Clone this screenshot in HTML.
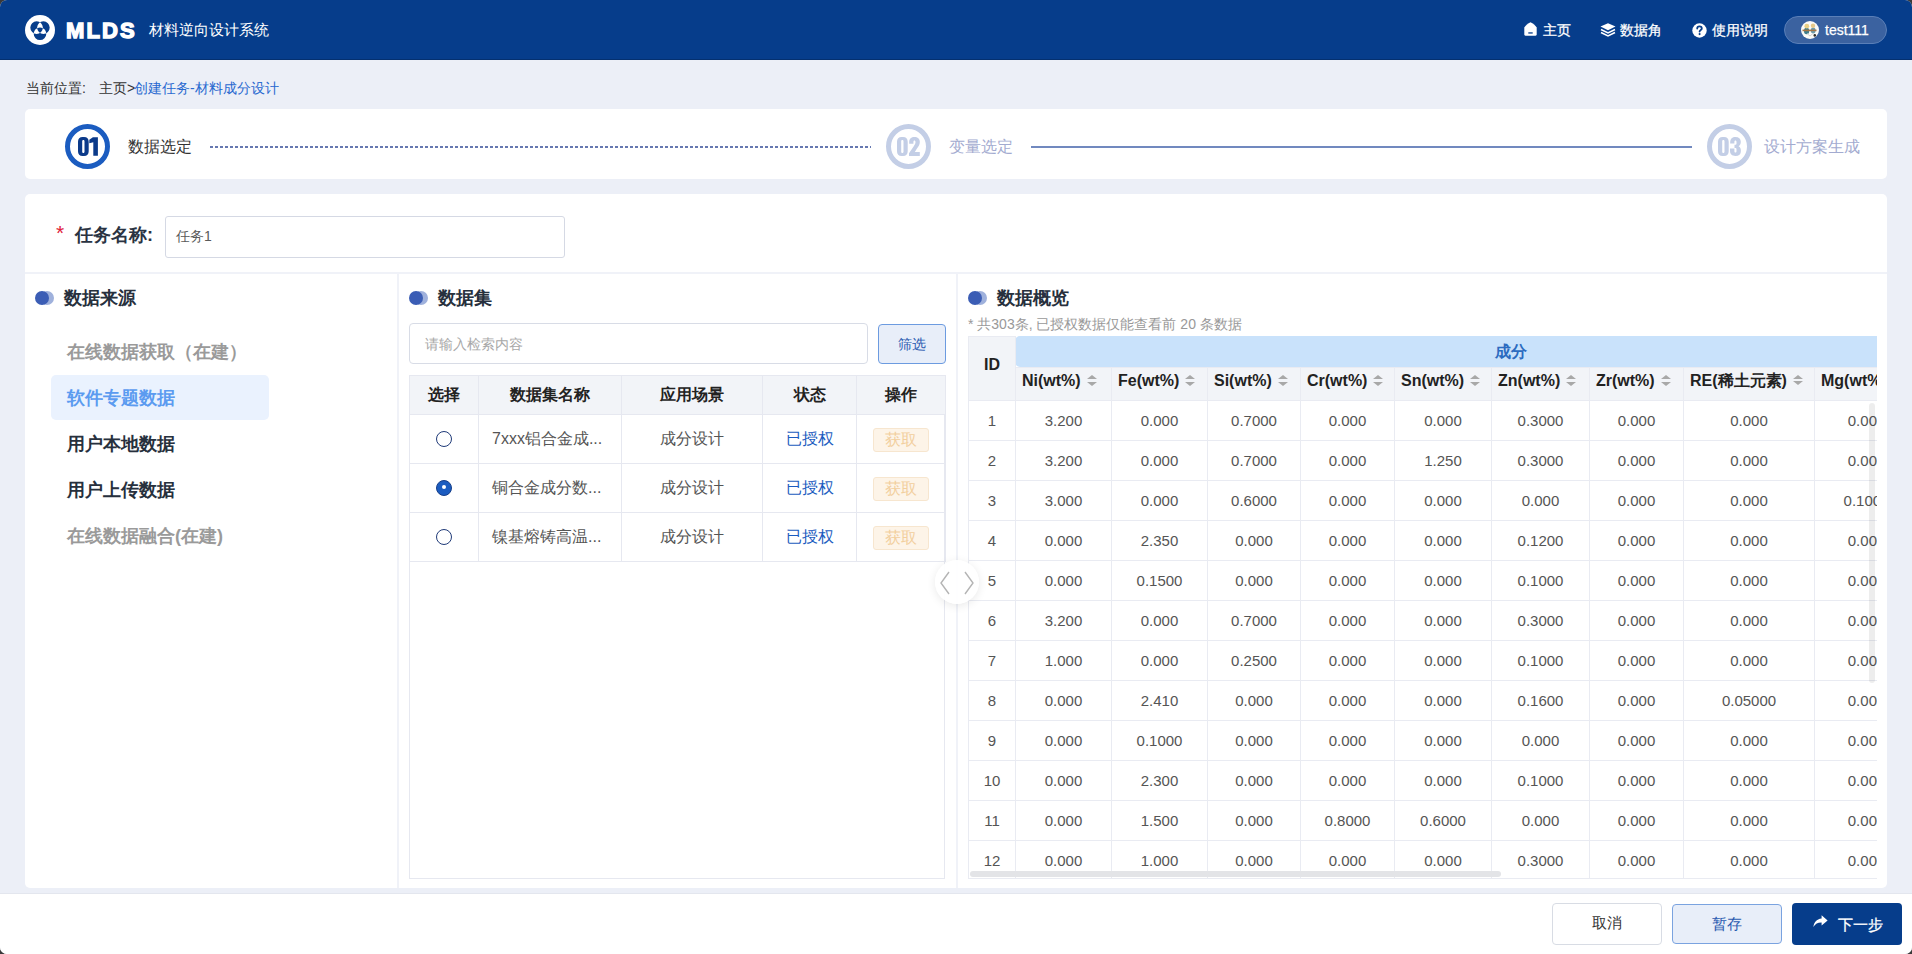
<!DOCTYPE html>
<html><head><meta charset="utf-8"><title>MLDS</title>
<style>
*{box-sizing:border-box;margin:0;padding:0}
html,body{width:1912px;height:954px;overflow:hidden;background:#3a3a3a}
body{font-family:"Liberation Sans",sans-serif;position:relative}
#app{position:absolute;left:0;top:0;width:1912px;height:954px;background:#eceff7;border-radius:7px;overflow:hidden}
.abs{position:absolute}
.hdr{left:0;top:0;width:1912px;height:60px;background:#063d8b;border-bottom:1px solid #04306f}
.nav{top:0;height:60px;line-height:60px;color:#fff;font-size:14px;white-space:nowrap;-webkit-text-stroke:0.25px #fff}
.pill{left:1784px;top:16px;width:103px;height:28px;border-radius:14px;background:#3b62a0;border:1px solid #5a7fb8}
.card{background:#fff;border-radius:5px}
.step-c{width:45px;height:45px;border-radius:50%;border:5px solid #1b5cc0}
.step-n{position:absolute;left:0;top:0;width:35px;line-height:35px;font-family:"Liberation Sans Narrow","Liberation Sans",sans-serif;font-weight:bold;font-size:24px;color:#0b3684;letter-spacing:-1px}
.step-t{font-size:16px;line-height:20px;top:137px}
.sect-dot{width:19px;height:14px}
.sect-dot:before{content:"";position:absolute;left:5px;top:0;width:14px;height:14px;border-radius:50%;background:#9fb1dc}
.sect-dot:after{content:"";position:absolute;left:0;top:0;width:14px;height:14px;border-radius:50%;background:#3b5db5}
.sect-t{font-size:18px;font-weight:bold;color:#27303d;line-height:24px}
.src{left:67px;font-size:18px;font-weight:bold;line-height:24px;color:#27303d;white-space:nowrap}
.src.dis{color:#9a9a9a}
table{border-collapse:collapse;table-layout:fixed}
.ds td,.ds th{border:1px solid #e6e8f0;text-align:center;font-size:16px;white-space:nowrap;overflow:hidden}
.ds th{background:#f2f4f8;color:#222;font-weight:bold;height:39px}
.ds td{height:49px;color:#555}
.radio{display:inline-block;width:16px;height:16px;border-radius:50%;border:1.3px solid #1f3a78;vertical-align:middle;position:relative;top:-1px}
.radio.on{background:#1b5cc0;border-color:#173f8a}
.radio.on:after{content:"";position:absolute;left:4.7px;top:4.7px;width:4px;height:4px;border-radius:50%;background:#fff}
.get{display:inline-block;width:56px;height:24px;line-height:22px;border:1px solid #f7e6cf;background:#fdf4e8;color:#f2cf9e;border-radius:3px;font-size:16px;vertical-align:middle;position:relative;top:1px}
.ov td,.ov th{border:1px solid #e9ebf2;font-size:15px;white-space:nowrap;overflow:hidden}
.ov td{height:40px;text-align:center;color:#555}
.ov th{background:#f2f4f8;color:#222;font-weight:bold;text-align:left;padding-left:6px;font-size:16px;padding-bottom:6px}
.sort{display:inline-block;width:10px;height:11px;position:relative;margin-left:6px;vertical-align:0px}
.sort:before{content:"";position:absolute;left:0;top:0;border-left:5px solid transparent;border-right:5px solid transparent;border-bottom:4.5px solid #a8a8a8}
.sort:after{content:"";position:absolute;left:0;top:6.5px;border-left:5px solid transparent;border-right:5px solid transparent;border-top:4.5px solid #a8a8a8}
.btn{height:41px;border-radius:4px;text-align:center;line-height:39px;font-size:14.5px}
</style></head>
<body>
<div id="app">
  <!-- header -->
  <div class="abs hdr"></div>
  <svg class="abs" style="left:25px;top:15px" width="30" height="30" viewBox="0 0 30 30">
    <circle cx="15" cy="15" r="15" fill="#fff"/>
    <path fill="#063d8b" fill-rule="evenodd" d="M5.3 12.6a6.3 6.3 0 1 0 12.6 0a6.3 6.3 0 1 0 -12.6 0Z M12.1 12.6a6.3 6.3 0 1 0 12.6 0a6.3 6.3 0 1 0 -12.6 0Z M8.7 18.7a6.3 6.3 0 1 0 12.6 0a6.3 6.3 0 1 0 -12.6 0Z"/>
  </svg>
  <div class="abs" style="left:66px;top:18px;font-size:22px;line-height:26px;font-weight:bold;color:#fff;letter-spacing:2.1px;-webkit-text-stroke:1.4px #fff">MLDS</div>
  <div class="abs" style="left:149px;top:20px;font-size:15px;line-height:20px;color:#fff">材料逆向设计系统</div>

  <svg class="abs" style="left:1524px;top:22px" width="13" height="14" viewBox="0 0 13 14"><path fill="#fff" d="M6.5 0.3C4 1.6 1.6 3.3 0.3 5.6V12.6C0.3 13.2 0.8 13.7 1.4 13.7H11.6C12.2 13.7 12.7 13.2 12.7 12.6V5.6C11.4 3.3 9 1.6 6.5 0.3Z"/><rect x="4.3" y="10.3" width="4.4" height="1.3" fill="#063d8b"/></svg>
  <div class="abs nav" style="left:1543px;font-weight:500">主页</div>
  <svg class="abs" style="left:1600px;top:23px" width="16" height="14" viewBox="0 0 16 14"><path fill="#fff" d="M8 0.2L15.5 3.6L8 7.2L0.5 3.6Z"/><path fill="none" stroke="#fff" stroke-width="1.7" d="M1 6.6L8 9.9L15 6.6M1 9.6L8 12.9L15 9.6"/></svg>
  <div class="abs nav" style="left:1620px;font-weight:500">数据角</div>
  <svg class="abs" style="left:1692px;top:23px" width="15" height="15" viewBox="0 0 15 15"><circle cx="7.5" cy="7.5" r="7.2" fill="#fff"/><path fill="none" stroke="#063d8b" stroke-width="1.8" stroke-linecap="round" d="M5.2 5.6C5.2 4.2 6.2 3.4 7.5 3.4C8.8 3.4 9.8 4.2 9.8 5.4C9.8 6.9 7.6 7 7.6 8.6"/><circle cx="7.6" cy="11.1" r="1.05" fill="#063d8b"/></svg>
  <div class="abs nav" style="left:1712px;font-weight:500">使用说明</div>
  <div class="abs pill"></div>
  <svg class="abs" style="left:1801px;top:21px" width="18" height="18" viewBox="0 0 18 18"><defs><clipPath id="av"><circle cx="9" cy="9" r="9"/></clipPath></defs><g clip-path="url(#av)"><rect width="18" height="18" fill="#fbfaf7"/><ellipse cx="5.6" cy="10" rx="2.6" ry="3.2" fill="#3f7d8c"/><ellipse cx="12.2" cy="9.6" rx="2.4" ry="3" fill="#6d9cad"/><circle cx="5.8" cy="5.2" r="2.4" fill="#e9cf86"/><circle cx="12" cy="4.8" r="2.2" fill="#e7c98a"/><rect x="1.5" y="8.6" width="14" height="1.6" fill="#a57444"/><path d="M6 12.5L9 15L12 12.5" stroke="#cfcfcf" stroke-width="1" fill="none"/><circle cx="13.8" cy="14.4" r="1.3" fill="#2a2a2a"/></g></svg>
  <div class="abs nav" style="left:1825px;font-size:14px">test111</div>

  <!-- breadcrumb -->
  <div class="abs" style="left:26px;top:79px;font-size:14px;line-height:18px;color:#333;white-space:nowrap">当前位置</div><div class="abs" style="left:82px;top:79px;font-size:14px;line-height:18px;color:#333">:</div><div class="abs" style="left:99px;top:79px;font-size:14px;line-height:18px;color:#333;white-space:nowrap">主页&gt;</div><div class="abs" style="left:134px;top:79px;font-size:14px;line-height:18px;color:#2a6ad0;white-space:nowrap">创建任务-材料成分设计</div>

  <!-- stepper -->
  <div class="abs card" style="left:25px;top:109px;width:1862px;height:70px"></div>
  <div class="abs step-c" style="left:65px;top:124px"></div>
  <svg class="abs" style="left:77.7px;top:137.2px" width="23" height="19" viewBox="0 0 23 19" fill="#0b3a8a"><path d="M4.6 0C1.6 0 0 1.8 0 4.8V14.2C0 17.2 1.6 19 4.6 19H6.1C9.1 19 10.7 17.2 10.7 14.2V4.8C10.7 1.8 9.1 0 6.1 0ZM5.35 3C5.9 3 6.5 3.3 6.5 4.2V14.8C6.5 15.7 5.9 16 5.35 16C4.8 16 4.2 15.7 4.2 14.8V4.2C4.2 3.3 4.8 3 5.35 3Z"/><path transform="translate(11.3 0)" d="M0 2.8L3.6 0.2H8.6V18.7H4V5.2L0 6.2Z"/></svg>
  <div class="abs step-t" style="left:128px;color:#333">数据选定</div>
  <div class="abs" style="left:210px;top:146px;width:661px;height:2px;background:repeating-linear-gradient(90deg,#6678b0 0,#6678b0 3px,transparent 3px,transparent 5px)"></div>
  <div class="abs step-c" style="left:886px;top:124px;border-color:#c3cee6"></div>
  <svg class="abs" style="left:897px;top:137px" width="23" height="19" viewBox="0 0 23 19" fill="#c3cee6"><path d="M4.6 0C1.6 0 0 1.8 0 4.8V14.2C0 17.2 1.6 19 4.6 19H6.1C9.1 19 10.7 17.2 10.7 14.2V4.8C10.7 1.8 9.1 0 6.1 0ZM5.35 3C5.9 3 6.5 3.3 6.5 4.2V14.8C6.5 15.7 5.9 16 5.35 16C4.8 16 4.2 15.7 4.2 14.8V4.2C4.2 3.3 4.8 3 5.35 3Z"/><path transform="translate(12 0)" d="M0.2 6.8V5C0.2 1.6 2.3 0 5.4 0C8.7 0 10.8 1.8 10.8 5C10.8 7.6 9.6 9.2 7.8 11.8L5.8 14.9H10.8V19H0V16.3L4.6 9.6C6 7.5 6.5 6.5 6.5 5.1C6.5 4 6 3.5 5.4 3.5C4.8 3.5 4.4 4 4.4 5.1V6.8Z"/></svg>
  <div class="abs step-t" style="left:949px;color:#a3abd0">变量选定</div>
  <div class="abs" style="left:1031px;top:146px;width:661px;height:2px;background:#7189bf"></div>
  <div class="abs step-c" style="left:1707px;top:124px;border-color:#c3cee6"></div>
  <svg class="abs" style="left:1718px;top:137px" width="23" height="19" viewBox="0 0 23 19" fill="#c3cee6"><path d="M4.6 0C1.6 0 0 1.8 0 4.8V14.2C0 17.2 1.6 19 4.6 19H6.1C9.1 19 10.7 17.2 10.7 14.2V4.8C10.7 1.8 9.1 0 6.1 0ZM5.35 3C5.9 3 6.5 3.3 6.5 4.2V14.8C6.5 15.7 5.9 16 5.35 16C4.8 16 4.2 15.7 4.2 14.8V4.2C4.2 3.3 4.8 3 5.35 3Z"/><path transform="translate(12 0)" d="M0.2 5.8C0.2 1.6 2.4 0 5.4 0C8.8 0 10.8 1.7 10.8 4.8C10.8 7 10 8.5 8.6 9.3C10.2 10 10.9 11.6 10.9 14C10.9 17.4 9 19 5.4 19C1.9 19 0 17.3 0 13.6V11.6H4.4V14.1C4.4 15.1 4.8 15.6 5.4 15.6C6.1 15.6 6.5 15.1 6.5 14.1V12.2C6.5 11.2 6.1 10.9 5.2 10.9H4.5V7.8H5.2C6.1 7.8 6.5 7.5 6.5 6.5V5C6.5 4 6.1 3.5 5.4 3.5C4.8 3.5 4.4 4 4.4 5V6.6H0.2Z"/></svg>
  <div class="abs step-t" style="left:1764px;color:#a3abd0">设计方案生成</div>

  <!-- main card -->
  <div class="abs card" style="left:25px;top:194px;width:1862px;height:694px"></div>
  <div class="abs" style="left:56px;top:223px;font-size:21px;line-height:20px;color:#e0203a">*</div>
  <div class="abs" style="left:75px;top:223px;font-size:18px;line-height:24px;font-weight:bold;color:#2a3342">任务名称:</div>
  <div class="abs" style="left:165px;top:216px;width:400px;height:42px;border:1px solid #d5d9e4;border-radius:3px;background:#fff"></div>
  <div class="abs" style="left:176px;top:227px;font-size:14px;line-height:18px;color:#5a5a5a">任务1</div>

  <div class="abs" style="left:25px;top:272px;width:1862px;height:2px;background:#f0f2f8"></div>
  <div class="abs" style="left:397px;top:274px;width:2px;height:614px;background:#f0f2f8"></div>
  <div class="abs" style="left:956px;top:274px;width:2px;height:614px;background:#f0f2f8"></div>

  <!-- left: data sources -->
  <div class="abs sect-dot" style="left:35px;top:291px"></div>
  <div class="abs sect-t" style="left:64px;top:286px">数据来源</div>
  <div class="abs src dis" style="top:340px">在线数据获取（在建）</div>
  <div class="abs" style="left:51px;top:375px;width:218px;height:45px;border-radius:5px;background:#eaf2fe"></div>
  <div class="abs src" style="top:386px;color:#5b9bf0">软件专题数据</div>
  <div class="abs src" style="top:432px">用户本地数据</div>
  <div class="abs src" style="top:478px">用户上传数据</div>
  <div class="abs src dis" style="top:524px">在线数据融合(在建)</div>

  <!-- middle: datasets -->
  <div class="abs sect-dot" style="left:409px;top:291px"></div>
  <div class="abs sect-t" style="left:438px;top:286px">数据集</div>
  <div class="abs" style="left:409px;top:323px;width:459px;height:41px;border:1px solid #d8dce6;border-radius:4px"></div>
  <div class="abs" style="left:425px;top:335px;font-size:14px;line-height:18px;color:#a8a8a8">请输入检索内容</div>
  <div class="abs btn" style="left:878px;top:324px;width:68px;height:40px;line-height:38px;border:1px solid #6c9be0;background:#e8eef9;color:#2a5ab0;font-size:14px">筛选</div>
  <div class="abs" style="left:409px;top:376px;width:536px;height:503px;border:1px solid #e6e8f0;border-top:none"></div>
  <table class="abs ds" style="left:409px;top:375px;width:536px">
    <colgroup><col style="width:69px"><col style="width:143px"><col style="width:141px"><col style="width:94px"><col style="width:89px"></colgroup>
    <tr><th>选择</th><th>数据集名称</th><th>应用场景</th><th>状态</th><th>操作</th></tr>
    <tr><td><span class="radio"></span></td><td style="text-align:left;padding-left:13px">7xxx铝合金成...</td><td>成分设计</td><td style="color:#1b5cc0">已授权</td><td><span class="get">获取</span></td></tr>
    <tr><td><span class="radio on"></span></td><td style="text-align:left;padding-left:13px">铜合金成分数...</td><td>成分设计</td><td style="color:#1b5cc0">已授权</td><td><span class="get">获取</span></td></tr>
    <tr><td><span class="radio"></span></td><td style="text-align:left;padding-left:13px">镍基熔铸高温...</td><td>成分设计</td><td style="color:#1b5cc0">已授权</td><td><span class="get">获取</span></td></tr>
  </table>

  <!-- right: overview -->
  <div class="abs sect-dot" style="left:968px;top:291px"></div>
  <div class="abs sect-t" style="left:997px;top:286px">数据概览</div>
  <div class="abs" style="left:968px;top:315px;font-size:14px;line-height:18px;color:#999;white-space:nowrap">* 共303条, 已授权数据仅能查看前 20 条数据</div>
  <div class="abs" style="left:968px;top:336px;width:909px;height:542px;overflow:hidden" id="ovwrap">
  <div class="abs" style="left:47px;top:0;width:862px;height:31px;background:#c9e2fb;border-radius:5px 0 0 5px"></div>
  <table class="ov" style="width:950px;position:relative">
    <colgroup><col style="width:47px"><col style="width:96px"><col style="width:96px"><col style="width:93px"><col style="width:94px"><col style="width:97px"><col style="width:98px"><col style="width:94px"><col style="width:131px"><col style="width:104px"></colgroup>
    <tr><th rowspan="2" style="text-align:center;padding:0 0 8px 0;height:64px">ID</th><th colspan="9" style="background:transparent;color:#2c6bc0;text-align:left;padding-left:479px;padding-bottom:0;height:31px;border-top-color:transparent;border-right-color:transparent">成分</th></tr>
    <tr><th style="height:33px">Ni(wt%)<i class="sort"></i></th><th>Fe(wt%)<i class="sort"></i></th><th>Si(wt%)<i class="sort"></i></th><th>Cr(wt%)<i class="sort"></i></th><th>Sn(wt%)<i class="sort"></i></th><th>Zn(wt%)<i class="sort"></i></th><th>Zr(wt%)<i class="sort"></i></th><th>RE(稀土元素)<i class="sort"></i></th><th>Mg(wt%)<i class="sort"></i></th></tr>
    <tr><td>1</td><td>3.200</td><td>0.000</td><td>0.7000</td><td>0.000</td><td>0.000</td><td>0.3000</td><td>0.000</td><td>0.000</td><td>0.000</td></tr>
    <tr><td>2</td><td>3.200</td><td>0.000</td><td>0.7000</td><td>0.000</td><td>1.250</td><td>0.3000</td><td>0.000</td><td>0.000</td><td>0.000</td></tr>
    <tr><td>3</td><td>3.000</td><td>0.000</td><td>0.6000</td><td>0.000</td><td>0.000</td><td>0.000</td><td>0.000</td><td>0.000</td><td>0.1000</td></tr>
    <tr><td>4</td><td>0.000</td><td>2.350</td><td>0.000</td><td>0.000</td><td>0.000</td><td>0.1200</td><td>0.000</td><td>0.000</td><td>0.000</td></tr>
    <tr><td>5</td><td>0.000</td><td>0.1500</td><td>0.000</td><td>0.000</td><td>0.000</td><td>0.1000</td><td>0.000</td><td>0.000</td><td>0.000</td></tr>
    <tr><td>6</td><td>3.200</td><td>0.000</td><td>0.7000</td><td>0.000</td><td>0.000</td><td>0.3000</td><td>0.000</td><td>0.000</td><td>0.000</td></tr>
    <tr><td>7</td><td>1.000</td><td>0.000</td><td>0.2500</td><td>0.000</td><td>0.000</td><td>0.1000</td><td>0.000</td><td>0.000</td><td>0.000</td></tr>
    <tr><td>8</td><td>0.000</td><td>2.410</td><td>0.000</td><td>0.000</td><td>0.000</td><td>0.1600</td><td>0.000</td><td>0.05000</td><td>0.000</td></tr>
    <tr><td>9</td><td>0.000</td><td>0.1000</td><td>0.000</td><td>0.000</td><td>0.000</td><td>0.000</td><td>0.000</td><td>0.000</td><td>0.000</td></tr>
    <tr><td>10</td><td>0.000</td><td>2.300</td><td>0.000</td><td>0.000</td><td>0.000</td><td>0.1000</td><td>0.000</td><td>0.000</td><td>0.000</td></tr>
    <tr><td>11</td><td>0.000</td><td>1.500</td><td>0.000</td><td>0.8000</td><td>0.6000</td><td>0.000</td><td>0.000</td><td>0.000</td><td>0.000</td></tr>
    <tr><td>12</td><td>0.000</td><td>1.000</td><td>0.000</td><td>0.000</td><td>0.000</td><td>0.3000</td><td>0.000</td><td>0.000</td><td>0.000</td></tr>
    <tr><td>13</td><td>0.000</td><td>1.000</td><td>0.000</td><td>0.000</td><td>0.000</td><td>0.3000</td><td>0.000</td><td>0.000</td><td>0.000</td></tr>
  </table>
  </div>
  <!-- scrollbars -->
  <div class="abs" style="left:968px;top:878px;width:909px;height:1px;background:#e9ebf2"></div>
  <div class="abs" style="left:970px;top:871px;width:531px;height:5.5px;border-radius:3px;background:#e3e4e7"></div>
  <div class="abs" style="left:1869px;top:403px;width:6px;height:280px;border-radius:3px;background:rgba(0,0,0,0.07)"></div>

  <!-- collapse toggle -->
  <div class="abs" style="left:935px;top:560px;width:44px;height:44px;border-radius:50%;background:rgba(255,255,255,0.92);box-shadow:0 2px 10px rgba(0,0,0,0.09)"></div>
  <svg class="abs" style="left:930px;top:560px" width="54" height="44" viewBox="930 560 54 44"><path fill="none" stroke="#b4b4b4" stroke-width="1.4" d="M949 572L941 583L949 594M965 572L973 583L965 594"/></svg>

  <!-- footer -->
  <div class="abs" style="left:0;top:893px;width:1912px;height:61px;background:#fff;border-top:1px solid #e3e6ee"></div>
  <div class="abs btn" style="left:1552px;top:903px;width:110px;height:42px;border:1px solid #d8dce4;background:#fff;color:#333">取消</div>
  <div class="abs btn" style="left:1672px;top:904px;width:110px;height:40px;line-height:38px;border:1px solid #7aa3e0;background:#e8eef9;color:#2a5ab0">暂存</div>
  <div class="abs btn" style="left:1792px;top:903px;width:110px;height:42px;background:#063d8b"></div>
  <svg class="abs" style="left:1813px;top:915px" width="15" height="13" viewBox="0 0 15 13"><path fill="#fff" d="M8.6 0.3L14.6 5.4L8.6 10.5V7.4C4.8 7.3 2.4 8.6 0.4 12C0.9 7.2 3.5 3.9 8.6 3.4Z"/></svg>
  <div class="abs" style="left:1838px;top:914px;font-size:14.5px;line-height:22px;color:#fff;-webkit-text-stroke:0.3px #fff">下一步</div>
</div>
</body></html>
